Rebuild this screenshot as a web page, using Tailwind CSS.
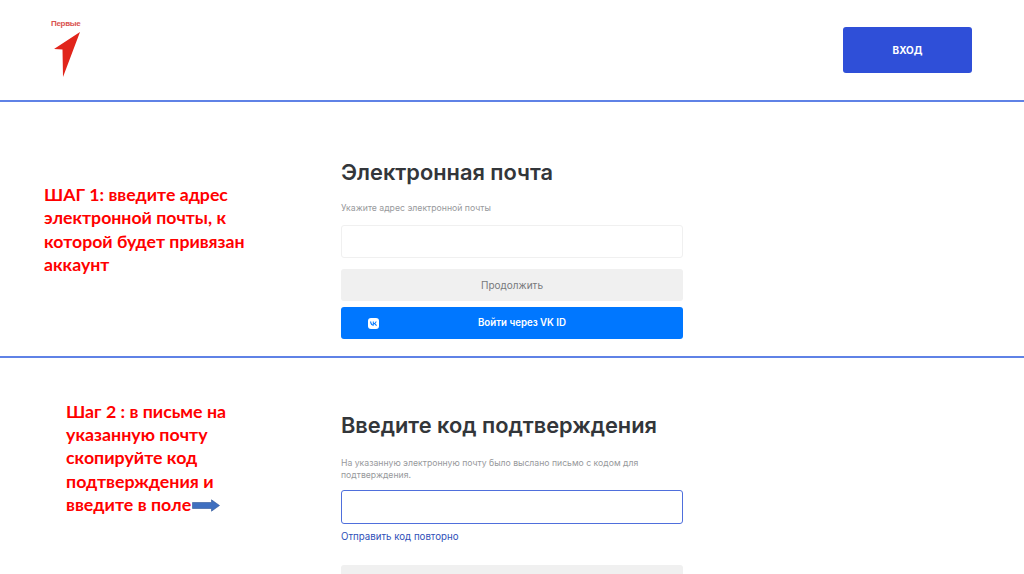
<!DOCTYPE html>
<html lang="ru">

<head>
    <meta charset="UTF-8">
    <title>Первые - вход</title>
    <script src="https://cdn.jsdelivr.net/npm/@tailwindcss/browser@4"></script>
</head>

<body class="bg-white h-[574px] w-[1024px] overflow-hidden font-['Inter',sans-serif]">

    <!-- Header -->
    <header class="h-[102px] flex justify-between border-b-2 border-b-[#5f82e6] pl-[50px] pr-[52px]">
        <div class="pt-[19px] w-[34px]">
            <div class="text-[8px] leading-[9px] font-bold text-[#d9534f] font-['Liberation_Sans',sans-serif] -tracking-[0.3px] ml-[1px]">Первые</div>
            <svg class="mt-[3px]" width="32" height="48" viewBox="0 0 32 48">
                <path d="M30 1 L4 18 L12.500 18.500 L13 46 Z" fill="#e1251b" />
            </svg>
        </div>
        <div class="pt-[27px]">
            <button class="w-[129px] h-[46px] rounded-[3px] bg-[#2f4fd8] text-white text-[10px] font-bold">ВХОД</button>
        </div>
    </header>

    <!-- Step 1 -->
    <section class="h-[256px] flex border-b-2 border-b-[#5f82e6]">
        <div class="w-[341px] pl-[44px] pt-[81px]">
            <p class="w-[240px] text-[17.700px] leading-[23.4px] font-bold text-[#f00] font-['Lato',sans-serif]">ШАГ 1: введите адрес электронной почты, к которой будет привязан аккаунт</p>
        </div>
        <div class="w-[342px] pt-[55px]">
            <h2 class="text-[21.800px] leading-[30px] font-semibold text-[#33363a]">Электронная почта</h2>
            <p class="mt-[15px] text-[8.700px] leading-[12px] text-[#97999c]">Укажите адрес электронной почты</p>
            <div class="mt-[11px] h-[33px] rounded-[3px] border border-[#f0f0f0] bg-white"></div>
            <button class="mt-[11px] block w-full h-[32px] rounded-[3px] bg-[#f0f0f0] text-[10px] text-[#77797c]">Продолжить</button>
            <button class="mt-[6px] relative block w-full h-[32px] pl-[20px] rounded-[3px] bg-[#0077ff] text-[9.700px] font-semibold text-white">
                <svg class="absolute left-[27px] top-[10.500px]" width="11" height="11" viewBox="0 0 11 11">
                    <rect width="11" height="11" rx="3" fill="#fff" />
                    <path d="M2 3.500 C2.200 6.300 3.600 7.700 5.800 7.700 L5.800 6 C6.700 6.100 7.400 6.800 7.800 7.700 L9 7.700 C8.600 6.500 7.800 5.800 7.200 5.500 C7.800 5.100 8.400 4.400 8.700 3.500 L7.600 3.500 C7.300 4.400 6.600 5.100 5.800 5.200 L5.800 3.500 L4.800 3.500 L4.800 6.400 C4.100 6.200 3.300 5.400 3.200 3.500 Z" fill="#0077ff" />
                </svg>
                Войти через VK ID
            </button>
        </div>
    </section>

    <!-- Step 2 -->
    <section class="flex">
        <div class="w-[341px] pl-[66px] pt-[42px]">
            <p class="w-[190px] text-[17.800px] leading-[23.2px] font-bold text-[#f00] font-['Lato',sans-serif]">Шаг 2 : в письме на указанную почту скопируйте код подтверждения и
                <span class="whitespace-nowrap">введите в поле</span>
            </p>
        </div>
        <div class="w-[342px] pt-[52px]">
            <h2 class="text-[21.800px] leading-[30px] font-semibold text-[#33363a]">Введите код подтверждения</h2>
            <p class="mt-[18px] text-[8.670px] leading-[11.500px] text-[#97999c]">На указанную электронную почту было выслано письмо с кодом для подтверждения.</p>
            <div class="mt-[9px] h-[34px] rounded-[3px] border border-[#4f6fdc] bg-white"></div>
            <a class="mt-[6px] block text-[9.700px] leading-[13px] text-[#2f4fb8]">Отправить код повторно</a>
            <div class="mt-[22px] h-[32px] rounded-[3px] bg-[#f0f0f0]"></div>
        </div>
    </section>

    <!-- arrow over the text of step 2 -->
    <svg class="absolute left-[192px] top-[499px]" width="28" height="13" viewBox="0 0 28 13">
        <path d="M0.500 3.500 H19.500 V0.800 L27.500 6.500 L19.500 12.200 V9.500 H0.500 Z" fill="#3f6fc0" stroke="#2f5597" stroke-width="0.600" />
    </svg>

</body>

</html>
